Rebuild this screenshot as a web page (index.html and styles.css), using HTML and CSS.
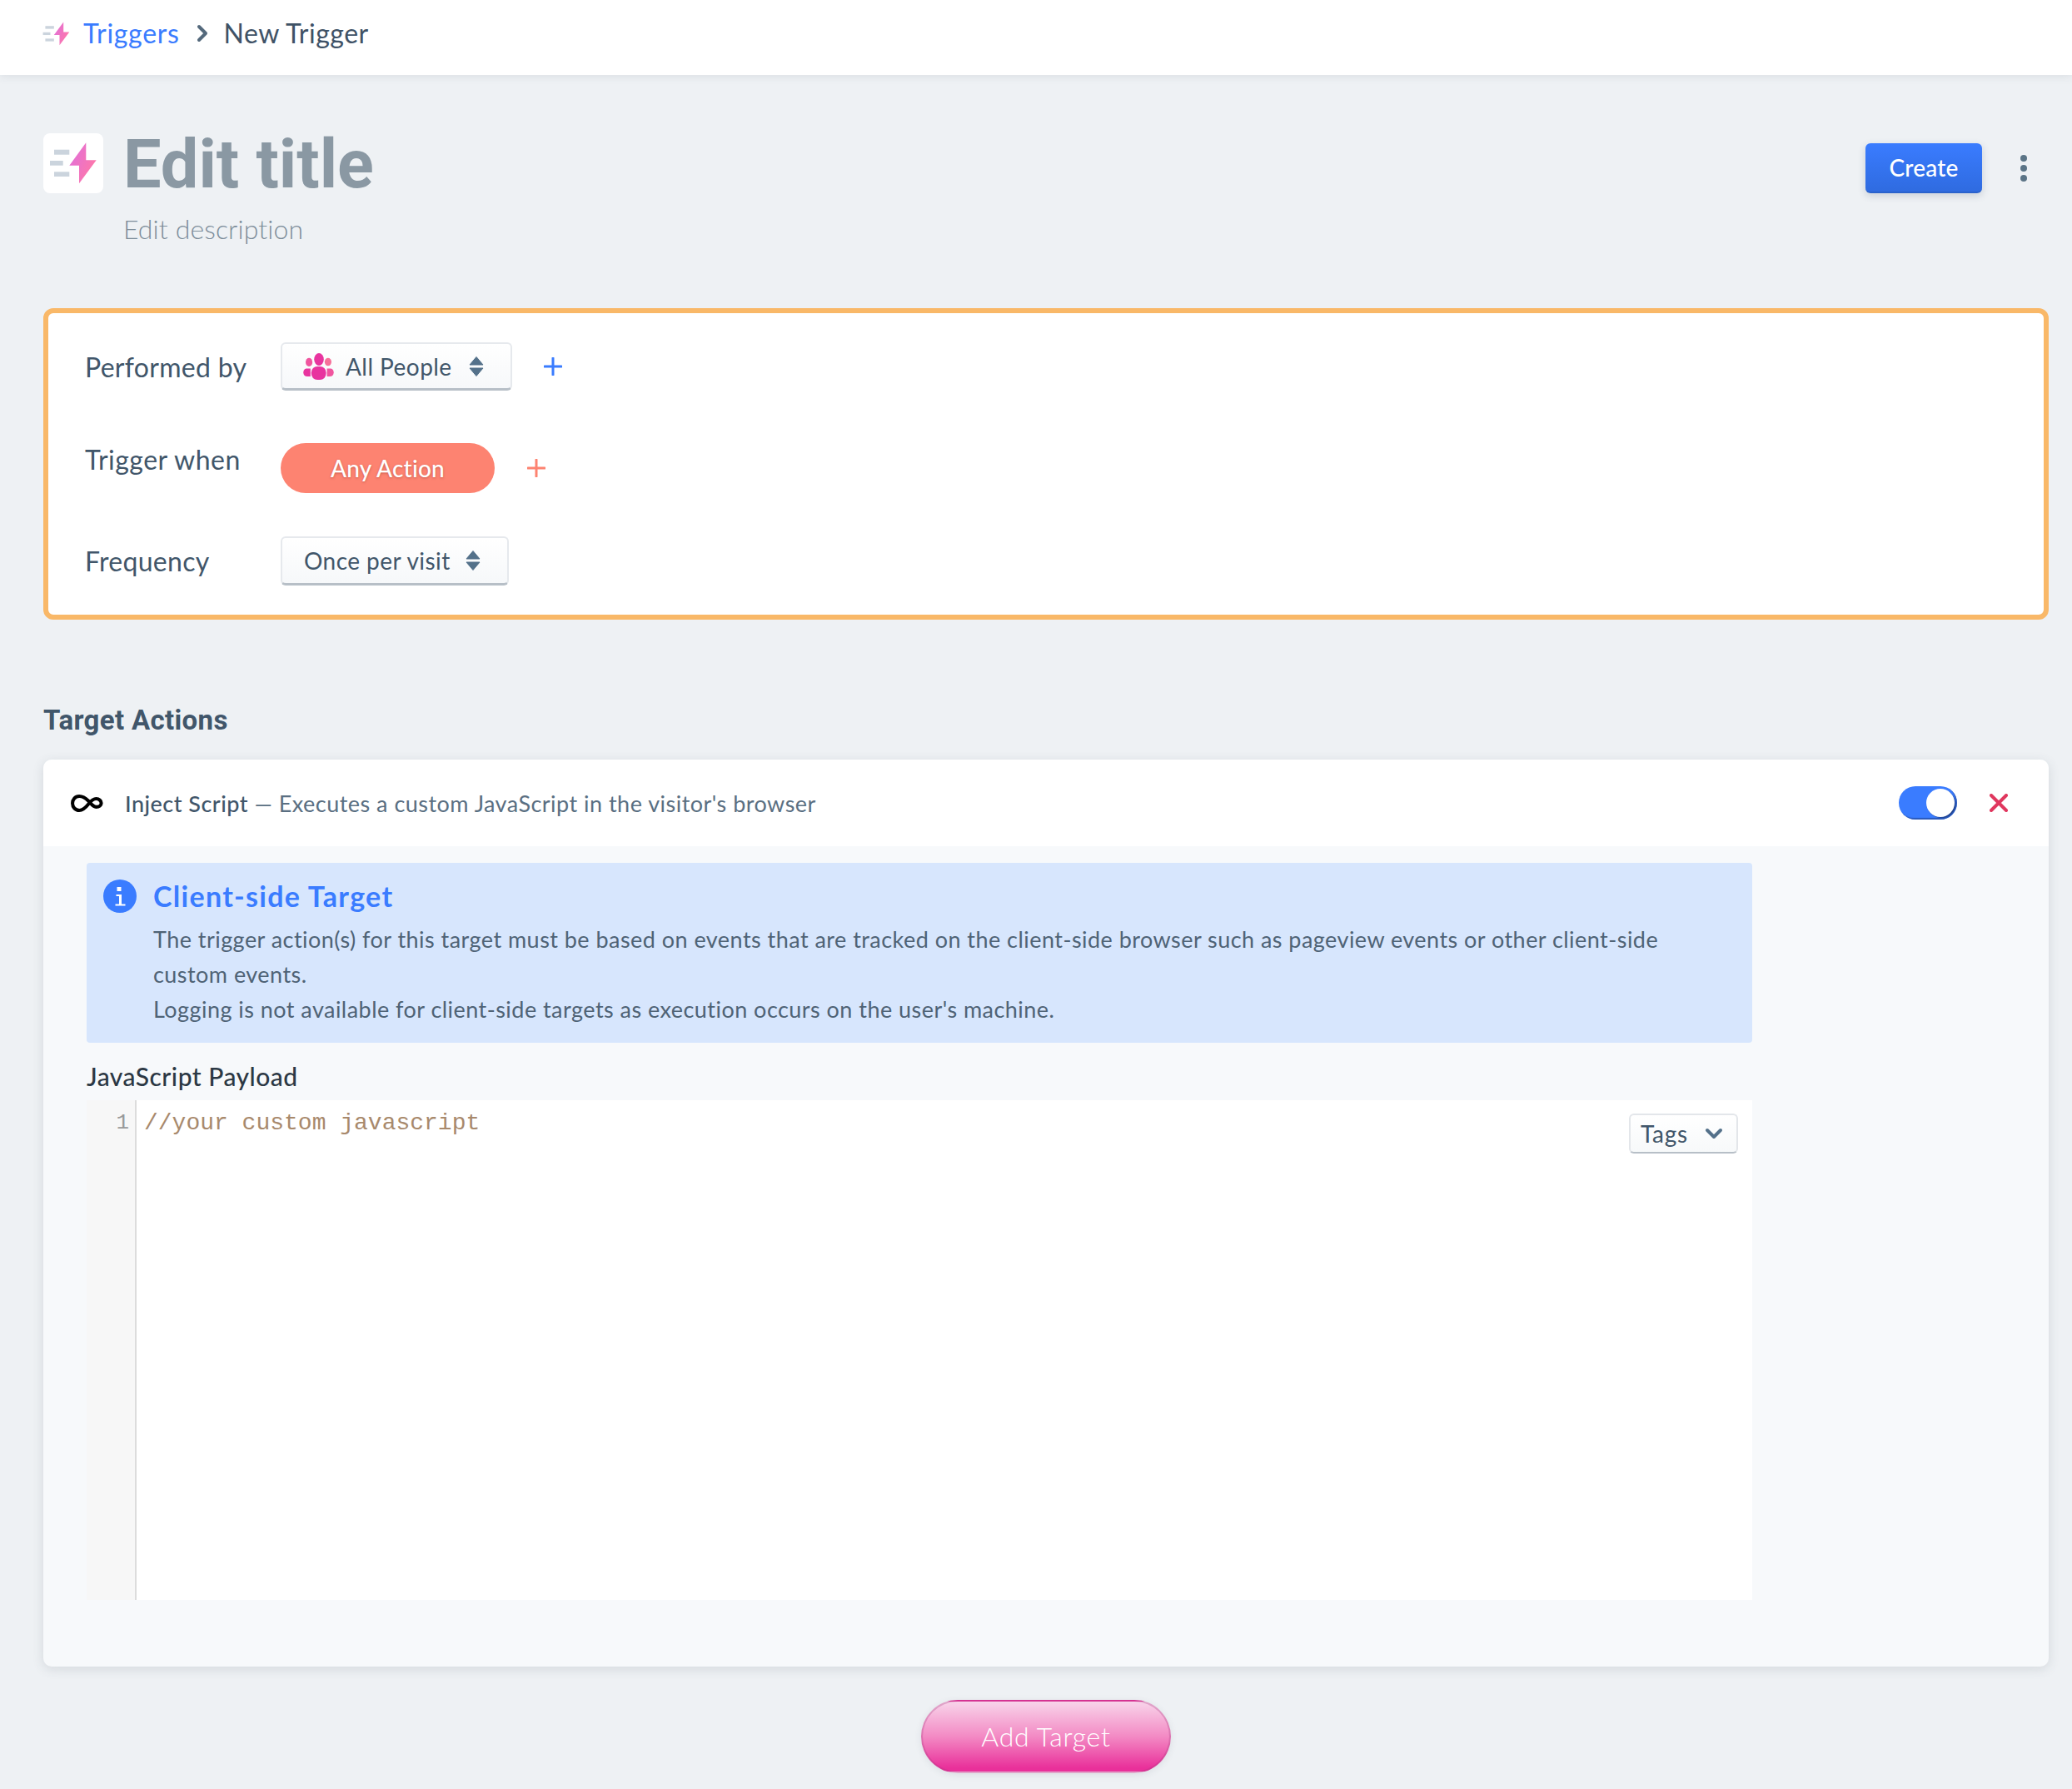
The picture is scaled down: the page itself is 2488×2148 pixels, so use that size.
FILE: index.html
```html
<!DOCTYPE html>
<html lang="en">
<head>
<meta charset="utf-8">
<title>New Trigger</title>
<link rel="stylesheet" href="styles.css">
</head>
<body>
<svg class="defs" width="0" height="0" aria-hidden="true">
  <defs>
    <linearGradient id="bolt" x1="0" y1="0" x2="1" y2="0.6">
      <stop offset="0" stop-color="#dd6fe0"/>
      <stop offset="1" stop-color="#ff78a8"/>
    </linearGradient>
    <symbol id="trigger-icon" viewBox="0 0 72 72">
      <rect x="13" y="19.700" width="18.300" height="6" fill="#cbd4dd"/>
      <rect x="8" y="33" width="15.700" height="5.700" fill="#cbd4dd"/>
      <rect x="13" y="46.300" width="18.300" height="5.700" fill="#cbd4dd"/>
      <path d="M51.300 11.300 L31.300 38.700 L43 38.700 L43 60.300 L63.700 32.300 L51.300 32.300 Z" fill="url(#bolt)"/>
    </symbol>
    <symbol id="updown" viewBox="0 0 18 24">
      <path d="M9 0.5 L17 10 H1 Z M9 23.5 L1 14 H17 Z" fill="#54718a" stroke="#54718a" stroke-width="1" stroke-linejoin="round"/>
    </symbol>
  </defs>
</svg>

<header class="topbar">
  <svg class="crumb-icon"><use href="#trigger-icon"/></svg>
  <a class="crumb-link">Triggers</a>
  <svg class="crumb-sep" viewBox="0 0 14 22"><path d="M3 3 L11 11 L3 19" fill="none" stroke="#54697c" stroke-width="4" stroke-linecap="round" stroke-linejoin="round"/></svg>
  <span class="crumb-current">New Trigger</span>
</header>

<main class="page">
  <section class="title-row">
    <div class="title-icon"><svg class="title-svg"><use href="#trigger-icon"/></svg></div>
    <div class="title-text">
      <h1 class="title">Edit title</h1>
      <p class="description">Edit description</p>
    </div>
    <div class="title-actions">
      <button class="btn-create">Create</button>
      <div class="kebab"><i></i><i></i><i></i></div>
    </div>
  </section>

  <section class="rules">
    <div class="rule rule-people">
      <span class="rule-label">Performed by</span>
      <div class="select select-people">
        <svg class="people" viewBox="0 0 107 94">
          <ellipse cx="55" cy="22" rx="17" ry="22" fill="#e8349f"/>
          <ellipse cx="20" cy="32" rx="12" ry="15" fill="#f0559f"/>
          <ellipse cx="87" cy="31" rx="12" ry="14" fill="#f6709a"/>
          <path d="M10 54 H25 V82 H14 C5 82 0 76 0 68 C0 61 4 54 10 54 Z" fill="#e8349f"/>
          <path d="M83 54 H97 C103 54 107 61 107 68 C107 76 102 82 93 82 H83 Z" fill="#f0559f"/>
          <rect x="28" y="47" width="52" height="47" rx="21" fill="#e8349f"/>
        </svg>
        <span class="select-text">All People</span>
        <svg class="updown"><use href="#updown"/></svg>
      </div>
      <svg class="plus plus-blue" viewBox="0 0 22 22"><path d="M11 1 V21 M1 11 H21" fill="none" stroke-width="3" stroke-linecap="round"/></svg>
    </div>
    <div class="rule rule-action">
      <span class="rule-label label-action">Trigger when</span>
      <div class="pill">Any Action</div>
      <svg class="plus plus-coral" viewBox="0 0 22 22"><path d="M11 1 V21 M1 11 H21" fill="none" stroke-width="3" stroke-linecap="round"/></svg>
    </div>
    <div class="rule rule-frequency">
      <span class="rule-label">Frequency</span>
      <div class="select select-frequency">
        <span class="select-text">Once per visit</span>
        <svg class="updown"><use href="#updown"/></svg>
      </div>
    </div>
  </section>

  <h2 class="section-title">Target Actions</h2>

  <section class="card">
    <div class="card-head">
      <svg class="infinity" viewBox="0 0 115 62"><path d="M62 22 C52 12 42 6 30 6 C15 6 6 18 6 31 C6 45 16 56 30 56 C46 56 56 42 64 32 C72 22 80 15 90 15 C100 15 108 22 108 30 C108 38 100 44 90 44 C78 44 70 30 62 22 Z" fill="none" stroke="#000" stroke-width="12"/></svg>
      <p class="card-title"><strong>Inject Script</strong> — Executes a custom JavaScript in the visitor's browser</p>
      <div class="toggle"><span class="knob"></span></div>
      <svg class="close" viewBox="0 0 22 22"><path d="M2 2 L20 20 M20 2 L2 20" fill="none" stroke="#e0375e" stroke-width="4" stroke-linecap="round"/></svg>
    </div>
    <div class="card-body">
      <div class="info">
        <svg class="info-icon" viewBox="0 0 40 40">
          <circle cx="20" cy="20" r="20" fill="#3a7cff"/>
          <rect x="16.500" y="9" width="5" height="5" fill="#fff"/>
          <path d="M15.500 18 H22 V29.500 H26.500 V31.500 H14.500 V29.500 H19 V20 H15.500 Z" fill="#fff"/>
        </svg>
        <div class="info-text">
          <h3 class="info-title">Client-side Target</h3>
          <p class="info-copy">The trigger action(s) for this target must be based on events that are tracked on the client-side browser such as pageview events or other client-side<br>custom events.<br>Logging is not available for client-side targets as execution occurs on the user's machine.</p>
        </div>
      </div>
      <label class="payload-label">JavaScript Payload</label>
      <div class="editor">
        <div class="gutter">1</div>
        <code class="code">//your custom javascript</code>
        <div class="tags">
          <span>Tags</span>
          <svg class="tags-chevron" viewBox="0 0 22 14"><path d="M3 3 L11 11 L19 3" fill="none" stroke="#54718a" stroke-width="4" stroke-linecap="round" stroke-linejoin="round"/></svg>
        </div>
      </div>
    </div>
  </section>

  <div class="add-row"><button class="btn-add">Add Target</button></div>
</main>
</body>
</html>
```

FILE: styles.css
```css
* { box-sizing: border-box; }
html, body { margin: 0; padding: 0; }
body {
  background: #eef1f4;
  font-family: Lato, "Open Sans", sans-serif;
  color: #41566a;
  height: 2148px;
  overflow: hidden;
}
.defs { position: absolute; }

.topbar {
  height: 90px;
  background: #fff;
  box-shadow: 0 2px 10px rgba(60, 70, 85, .1);
  display: flex;
  align-items: center;
  padding: 0 0 10px 47px;
  position: relative;
}
.crumb-icon { width: 41px; height: 41px; margin-right: 12px; }
.crumb-link { color: #3a7cff; font-size: 32px; letter-spacing: .7px; margin-top: -2px; }
.crumb-sep { width: 14px; height: 22px; margin: 0 19px 0 20px; }
.crumb-current { color: #3f5266; font-size: 32px; letter-spacing: .5px; margin-top: -2px; }

.page { padding: 70px 28px 0 52px; }

.title-row { display: flex; align-items: flex-start; height: 210px; }
.title-icon {
  width: 72px; height: 72px;
  background: #fff;
  border-radius: 8px;
  display: flex; align-items: center; justify-content: center;
}
.title-svg { width: 72px; height: 72px; }
.title-text { margin-left: 24px; }
.title {
  margin: -10px 0 0 0;
  font: 700 81px/96px Roboto, sans-serif;
  color: #8a98a3;
}
.description { margin: 11px 0 0; font-size: 32px; letter-spacing: .1px; line-height: 36px; color: #7d8d9a; font-weight: 300; }
.title-actions { margin-left: auto; display: flex; align-items: center; margin-top: 12px; }
.btn-create {
  width: 140px; height: 60px;
  border: 0; border-bottom: 2px solid #2a62cc;
  border-radius: 6px;
  background: linear-gradient(#3a7cff, #2f6be0);
  color: #fff;
  font: 500 28px/1 Lato, sans-serif;
  letter-spacing: .2px;
  box-shadow: 0 3px 10px rgba(50, 70, 100, .2);
}
.kebab { width: 8px; margin: 0 26px 0 46px; display: flex; flex-direction: column; gap: 4px; }
.kebab i { display: block; width: 8px; height: 8px; border-radius: 50%; background: #5b7486; }

.rules {
  height: 374px;
  width: 2408px;
  background: #fff;
  border: 6px solid #f9b868;
  border-radius: 12px;
  padding: 0 0 0 44px;
  position: relative;
}
.rule { display: flex; align-items: center; }
.rule-label { width: 235px; font-size: 32px; letter-spacing: .3px; color: #41566a; }
.rule-people { height: 58px; margin-top: 35px; }
.rule-action { height: 60px; margin-top: 63px; }
.label-action { margin-top: -22px; letter-spacing: .5px; }
.rule-frequency { height: 59px; margin-top: 52px; }

.select {
  height: 58px;
  display: flex; align-items: center;
  background: linear-gradient(#fff, #f6f8fa);
  border: 2px solid #e6e9ed;
  border-bottom: 3px solid #b7bfc7;
  border-radius: 6px;
  padding-left: 25px;
}
.select-people { width: 278px; }
.select-frequency { width: 274px; height: 59px; padding-left: 26px; }
.select-text { font-size: 28px; letter-spacing: .45px; color: #41566a; white-space: nowrap; }
.people { width: 37px; height: 32px; margin-right: 14px; flex: none; }
.updown { width: 18px; height: 24px; margin-left: auto; margin-right: 32px; flex: none; }

.plus { width: 22px; height: 22px; flex: none; }
.plus-blue { margin-left: 38px; stroke: #3a7cff; }
.plus-coral { margin-left: 39px; stroke: #fd8371; }

.pill {
  width: 257px; height: 60px;
  background: #fd8371;
  border-radius: 30px;
  color: #fff;
  display: flex; align-items: center; justify-content: center;
  font-size: 28px;
  font-weight: 500;
  letter-spacing: .2px;
  text-shadow: 0 1px 3px rgba(120, 40, 30, .4);
}

.section-title {
  margin: 103px 0 0;
  height: 35px;
  font: 700 33px/36px Roboto, sans-serif;
  letter-spacing: .35px;
  color: #41566a;
}

.card {
  width: 2408px;
  height: 1089px;
  margin-top: 30px;
  border-radius: 10px;
  overflow: hidden;
  background: #f7f9fb;
  box-shadow: 0 3px 14px rgba(60, 70, 85, .14);
}
.card-head {
  height: 104px;
  background: #fff;
  display: flex; align-items: center;
  padding: 0 49px 0 33px;
}
.infinity { width: 39px; height: 21px; flex: none; }
.card-title { margin: 0 0 0 26px; font-size: 27px; letter-spacing: .48px; color: #5a6f82; }
.card-title strong { font-weight: 500; color: #41566a; }
.toggle {
  margin-left: auto;
  width: 70px; height: 40px;
  border-radius: 20px;
  background: #3a7cff;
  box-shadow: inset -2px -2px 1px rgba(30, 60, 130, .55);
  position: relative;
}
.knob {
  position: absolute; right: 3px; top: 3px;
  width: 34px; height: 34px;
  border-radius: 50%;
  background: #fff;
  box-shadow: 1px 1px 1px rgba(20, 40, 90, .6);
}
.close { width: 22px; height: 22px; margin-left: 39px; flex: none; }

.card-body { padding: 20px 0 0 52px; }
.info {
  width: 2000px; height: 216px;
  background: #d7e6fd;
  border-radius: 4px;
  display: flex;
  padding: 20px 0 0 20px;
}
.info-icon { width: 40px; height: 40px; flex: none; }
.info-text { margin-left: 20px; }
.info-title { margin: 0; font-size: 34px; letter-spacing: 1.300px; line-height: 40px; font-weight: 700; color: #3a7cff; }
.info-copy { margin: 11px 0 0; font-size: 27px; letter-spacing: .46px; line-height: 42px; color: #4f6376; white-space: nowrap; }

.payload-label {
  display: block;
  height: 69px;
  padding-top: 22px;
  font-size: 30px;
  letter-spacing: .5px;
  line-height: 36px;
  font-weight: 500;
  color: #2c3844;
}
.editor {
  width: 2000px; height: 600px;
  background: #fff;
  display: flex;
  position: relative;
}
.gutter {
  width: 60px;
  background: #f7f7f7;
  border-right: 2px solid #dcdcdc;
  font: 26px/55px "Liberation Mono", monospace;
  color: #999;
  text-align: right;
  padding-right: 7px;
}
.code {
  margin-left: 9px;
  font: 28px/55px "Liberation Mono", monospace;
  color: #a8896c;
}
.tags {
  position: absolute; right: 17px; top: 16px;
  width: 131px; height: 48px;
  background: linear-gradient(#fff, #f7f9fa);
  border: 2px solid #e3e6ea;
  border-bottom: 2px solid #b7bfc7;
  border-radius: 6px;
  display: flex; align-items: center;
  padding-left: 12px;
  font-size: 28px;
  letter-spacing: .7px;
  color: #41566a;
}
.tags-chevron { width: 22px; height: 14px; margin-left: auto; margin-right: 16px; }

.add-row { display: flex; justify-content: center; margin-top: 40px; padding-right: 0; }
.btn-add {
  width: 300px; height: 88px;
  border: 2px solid rgba(170, 60, 130, .3);
  border-radius: 44px;
  background: linear-gradient(#f8d4ea, #f38ac4 50%, #e9309a 95%);
  color: #fff;
  font: 300 32px/1 Lato, sans-serif;
  letter-spacing: .7px;
  box-shadow: 0 2px 8px rgba(60, 70, 85, .1);
}
```
